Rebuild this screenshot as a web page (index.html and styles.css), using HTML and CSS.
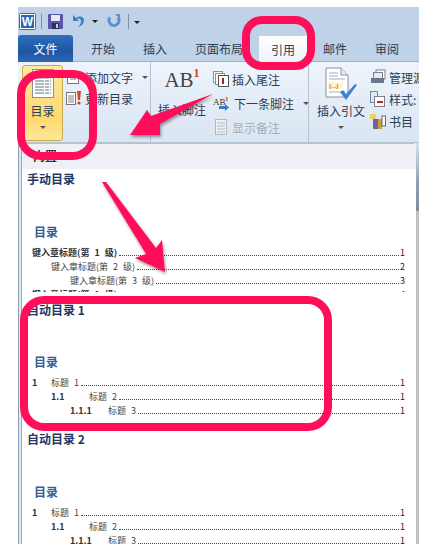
FILE: index.html
```html
<!DOCTYPE html>
<html lang="zh">

<head>
    <meta charset="utf-8">
    <title>引用 目录</title>
    <link rel="stylesheet" href="styles.css">
</head>

<body>
    <div class="window">
        <div class="titlebar">
            <svg class="qat-word" width="17" height="17" viewBox="0 0 17 17"><rect x=".5" y=".5" width="16" height="16" rx="1" fill="#fff" stroke="#2f6fb8"/><rect x="2" y="2" width="13" height="13" fill="#2a66b4"/><text x="8.5" y="13" text-anchor="middle" class="word-w">W</text></svg>
            <span class="qat-sep"></span>
            <svg width="15" height="15" viewBox="0 0 15 15"><rect x="0" y="0" width="15" height="15" rx="1" fill="#5a55a8"/><rect x="3" y="1" width="9" height="6" fill="#e6e8f2"/><rect x="4" y="9" width="7" height="6" fill="#30305c"/><rect x="8" y="10" width="2" height="4" fill="#c9cbe0"/></svg>
            <svg class="qat-undo" width="14" height="14" viewBox="0 0 14 14"><path d="M2 1v6h6L6 5c2-1 4 0 4 2 0 2-1 4-3 6 4-1 6-4 6-7 0-3-4-5-8-2z" fill="#3f7fc4"/></svg>
            <span class="qat-drop"></span>
            <svg class="qat-redo" width="14" height="14" viewBox="0 0 14 14"><path d="M3 3.500A5 5 0 1 0 11 3.500" fill="none" stroke="#5b8fcf" stroke-width="3"/><path d="M8 0h5v5z" fill="#5b8fcf"/></svg>
            <span class="qat-sep qat-sep-last"></span>
            <span class="qat-more"></span>
        </div>

        <div class="tabs">
            <span class="tab-file">文件</span>
            <span class="tab tab-first">开始</span>
            <span class="tab">插入</span>
            <span class="tab">页面布局</span>
            <span class="tab tab-active">引用</span>
            <span class="tab">邮件</span>
            <span class="tab">审阅</span>
        </div>

        <div class="ribbon">
            <div class="group group-toc">
                <div class="big-toc">
                    <svg width="22" height="29" viewBox="0 0 22 29"><rect x=".5" y=".5" width="21" height="28" fill="#fff" stroke="#8a8f98"/><path d="M3 6h16M3 9h16M3 12h16M3 15h16M3 18h16M3 21h16M3 24h16" stroke="#5f7288" stroke-dasharray="9 1 4 1"/></svg>
                    <span class="big-toc-label">目录</span>
                    <span class="caret"></span>
                </div>
                <div class="small-rows small-rows-toc">
                    <div class="small-row">
                        <svg width="16" height="16" viewBox="0 0 16 16"><rect x="1.500" y="2.500" width="11" height="12" fill="#fff" stroke="#777"/><path d="M4 7h6M4 10h6" stroke="#777"/></svg>
                        <span>添加文字</span><span class="caret caret-inline"></span>
                    </div>
                    <div class="small-row">
                        <svg width="16" height="16" viewBox="0 0 16 16"><rect x=".5" y="2.500" width="9" height="12" fill="#fff" stroke="#777"/><path d="M2 6h6M2 8h6M2 10h6M2 12h6" stroke="#888"/><path d="M11 1h4l-1 9h-2z" fill="#d8431c"/><circle cx="13" cy="13" r="1.600" fill="#d8431c"/></svg>
                        <span>更新目录</span>
                    </div>
                </div>
            </div>

            <div class="group group-notes">
                <div class="big-ab">
                    <div class="ab-mark">AB<sup class="ab-one">1</sup></div>
                    <span>插入脚注</span>
                </div>
                <div class="small-rows small-rows-notes">
                    <div class="small-row">
                        <svg width="16" height="16" viewBox="0 0 16 16"><rect x=".5" y=".5" width="9" height="11" fill="#fff" stroke="#8a8f98"/><rect x="2.500" y="2.500" width="9" height="11" fill="#fff" stroke="#8a8f98"/><rect x="5.500" y="4.500" width="10" height="11" fill="#fff" stroke="#555"/><path d="M10 7v6" stroke="#a02020" stroke-width="2"/></svg>
                        <span>插入尾注</span>
                    </div>
                    <div class="small-row">
                        <svg width="18" height="16" viewBox="0 0 18 16"><text x="0" y="10" class="ab-small">AB</text><text x="12" y="6" class="ab-small-one">1</text><path d="M6 11h6V9l4 3.500-4 3.500v-2H6z" fill="#3b78c4"/></svg>
                        <span>下一条脚注</span><span class="caret caret-inline"></span>
                    </div>
                    <div class="small-row small-row-off">
                        <svg width="16" height="16" viewBox="0 0 16 16"><rect x="2.500" y=".5" width="11" height="15" fill="#eef1f4" stroke="#b4b9bf"/><path d="M4 4h8M4 7h8M4 10h8M4 13h8" stroke="#b4b9bf"/></svg>
                        <span>显示备注</span>
                    </div>
                </div>
            </div>

            <div class="group group-cite">
                <div class="big-cite">
                    <svg width="32" height="34" viewBox="0 0 32 34"><path d="M1 1h15l7 7v22H1z" fill="#fff" stroke="#8a8f98"/><path d="M16 1v7h7" fill="#e8ebef" stroke="#8a8f98"/><path d="M4 6h9M4 9h9M4 12h16M4 25h16" stroke="#a8adb5"/><rect x="3" y="15" width="15" height="7" fill="#fff4d8"/><text x="4" y="21" class="cite-mark">{...}</text><path d="M15 25l3-2 3 4 9-10 2 1-11 15z" fill="#3f82cc"/></svg>
                    <span>插入引文</span>
                    <span class="caret"></span>
                </div>
                <div class="small-rows small-rows-cite">
                    <div class="small-row">
                        <svg width="16" height="16" viewBox="0 0 16 16"><rect x="6" y="1" width="9" height="9" fill="#fff" stroke="#7a808a"/><rect x="3.500" y="3.500" width="9" height="9" fill="#e8edf3" stroke="#7a808a"/><path d="M1 9h13v5H1z" fill="#66788e"/></svg>
                        <span class="no-wrap">管理源</span>
                    </div>
                    <div class="small-row">
                        <svg width="16" height="16" viewBox="0 0 16 16"><rect x=".5" y=".5" width="7" height="11" fill="#dfe7f0" stroke="#7088a0"/><rect x="4.500" y="5.500" width="10" height="10" fill="#fff" stroke="#7a808a"/><path d="M7 11h6" stroke="#c02828" stroke-width="2"/></svg>
                        <span>样式:</span>
                    </div>
                    <div class="small-row">
                        <svg width="16" height="16" viewBox="0 0 16 16"><rect x="0" y="1" width="6" height="5" fill="#f2cf55"/><rect x="3" y="6" width="5" height="10" fill="#6d63a8"/><rect x="8" y="6" width="4" height="10" fill="#c7a030"/><rect x="12" y="3" width="3.500" height="10" fill="#fff" stroke="#666"/></svg>
                        <span>书目</span>
                    </div>
                </div>
            </div>
        </div>

        <div class="lower">
            <div class="doc-edge"></div>
            <div class="gallery">
                <div class="gallery-head">内置</div>

                <div class="entry entry-manual">
                    <div class="entry-title">手动目录</div>
                    <div class="toc-title">目录</div>
                    <div class="toc-row toc-bold"><span>键入章标题(第 1 级)</span><i></i><b>1</b></div>
                    <div class="toc-row lv2"><span>键入章标题(第 2 级)</span><i></i><b>2</b></div>
                    <div class="toc-row lv3"><span>键入章标题(第 3 级)</span><i></i><b>3</b></div>
                    <div class="toc-row toc-bold"><span>键入章标题(第 1 级)</span><i></i><b>4</b></div>
                </div>

                <div class="entry entry-auto1">
                    <div class="entry-title">自动目录 1</div>
                    <div class="toc-title">目录</div>
                    <div class="toc-row"><em class="num">1</em><span>标题 1</span><i></i><b>1</b></div>
                    <div class="toc-row lv2"><em class="num">1.1</em><span>标题 2</span><i></i><b>1</b></div>
                    <div class="toc-row lv3"><em class="num">1.1.1</em><span>标题 3</span><i></i><b>1</b></div>
                </div>

                <div class="entry entry-auto2">
                    <div class="entry-title">自动目录 2</div>
                    <div class="toc-title">目录</div>
                    <div class="toc-row"><em class="num">1</em><span>标题 1</span><i></i><b>1</b></div>
                    <div class="toc-row lv2"><em class="num">1.1</em><span>标题 2</span><i></i><b>1</b></div>
                    <div class="toc-row lv3"><em class="num">1.1.1</em><span>标题 3</span><i></i><b>1</b></div>
                </div>
            </div>
            <div class="doc-scroll"></div>
        </div>
    </div>

    <!-- red marks drawn on top of the screenshot -->
    <svg class="marks" width="448" height="544" viewBox="0 0 448 544">
        <defs>
            <filter id="shade" x="-10%" y="-10%" width="130%" height="130%">
                <feDropShadow dx="1" dy="2" stdDeviation="1.500" flood-color="#000" flood-opacity=".4"/>
            </filter>
        </defs>
        <rect class="ring" x="21" y="74" width="72" height="82" rx="20"/>
        <rect class="ring" x="246" y="20" width="65" height="46" rx="16"/>
        <rect class="ring" x="24" y="300" width="304" height="127" rx="20"/>
        <path class="arrow" filter="url(#shade)" d="M130 135 147 110 151 116 213 94 160 124 160 135z"/>
        <path class="arrow" filter="url(#shade)" d="M102 182 106 182 156 248 162 240 165 272 135 258 146 254z"/>
    </svg>
</body>

</html>
```

FILE: styles.css
```css
html, body {
    margin: 0;
    height: 544px;
    overflow: hidden;
    background: #fff;
}

body {
    font-family: "Noto Sans CJK SC", "Noto Sans", sans-serif;
    font-size: 12px;
    color: #2b3b52;
}

.window {
    margin: 7px 0 0 18px;
    width: 401px;
    height: 537px;
    overflow: hidden;
}

/* title bar */
.titlebar {
    height: 28px;
    display: flex;
    align-items: center;
    background: #c0d2e8;
    padding-left: 1px;
    gap: 5px;
}

.word-w {
    font: bold 12px "Liberation Sans", sans-serif;
    fill: #fff;
}

.qat-sep {
    width: 1px;
    height: 15px;
    background: #7f8fa5;
    margin-right: 1px;
}

.qat-undo {
    margin-left: 3px;
}

.qat-drop {
    width: 0;
    height: 0;
    border: 3px solid transparent;
    border-top: 3px solid #222;
    border-bottom: 0;
    margin-left: 2px;
}

.qat-redo {
    margin-left: 4px;
}

.qat-sep-last {
    margin-left: 2px;
    margin-right: 0;
}

.qat-more {
    width: 0;
    height: 0;
    border: 3px solid transparent;
    border-top: 3px solid #222;
    border-bottom: 0;
    position: relative;
    top: 1px;
}

/* tabs */
.tabs {
    height: 27px;
    display: flex;
    align-items: center;
    gap: 28px;
    background: #c0d2e8;
    border-bottom: 1px solid #9fb2c9;
    box-sizing: border-box;
}

.tab-file {
    width: 55px;
    height: 27px;
    line-height: 27px;
    text-align: center;
    color: #fff;
    background: linear-gradient(#2f6fc0, #1f56a0 60%, #2a68b8);
    border-radius: 3px 3px 0 0;
    margin-right: -10px;
}

.tab {
    line-height: 27px;
}

.tab-active {
    margin: 0 -12px;
    padding: 0 12px;
    height: 26px;
    line-height: 27px;
    align-self: flex-start;
    margin-top: 1px;
    background: linear-gradient(#fff, #eef4fb);
}

/* ribbon */
.ribbon {
    height: 81px;
    display: flex;
    background: linear-gradient(#eef4fb, #d9e5f3);
    border-bottom: 1px solid #b6c4d4;
    box-sizing: border-box;
}

.group {
    display: flex;
    box-sizing: border-box;
    border-right: 1px solid #b4c3d5;
}

.group-toc {
    width: 133px;
    padding: 3px 0 0 4px;
}

.group-notes {
    width: 158px;
}

.group-cite {
    width: 110px;
    border-right: 0;
}

.big-toc {
    width: 41px;
    height: 76px;
    padding-top: 3px;
    box-sizing: border-box;
    border: 1px solid #c9a94e;
    border-radius: 3px;
    background: linear-gradient(#fde9a3, #fdd96f 70%, #fee79a);
    display: flex;
    flex-direction: column;
    align-items: center;
}

.big-toc-label {
    margin-top: 4px;
    line-height: 18px;
    color: #1f3f5c;
}

.caret {
    width: 0;
    height: 0;
    border: 3px solid transparent;
    border-top: 3px solid #555;
    border-bottom: 0;
    margin-top: 6px;
}

.caret-inline {
    margin: 0 0 0 6px;
}

.small-rows {
    display: flex;
    flex-direction: column;
}

.small-rows-toc {
    margin-left: 3px;
    padding-top: 4px;
    gap: 5px;
}

.small-rows-notes {
    margin-left: 7px;
    padding-top: 9px;
    gap: 8px;
}

.small-rows-cite {
    margin-left: 5px;
    padding-top: 7px;
    gap: 6px;
}

.small-row {
    height: 16px;
    display: flex;
    align-items: center;
    gap: 3px;
    white-space: nowrap;
}

.small-row-off {
    color: #a5adb8;
}

.big-ab {
    width: 61px;
    margin-left: 7px;
    display: flex;
    flex-direction: column;
    align-items: center;
    white-space: nowrap;
}

.ab-mark {
    font: 21px "Liberation Serif", serif;
    color: #444;
    height: 32px;
    line-height: 32px;
    margin-top: 2px;
}

.ab-one {
    font: bold 12px "Liberation Serif", serif;
    color: #c8431c;
    vertical-align: 10px;
    line-height: 0;
}

.big-ab span {
    margin-top: 5px;
    line-height: 18px;
}

.ab-small {
    font: 9px "Liberation Serif", serif;
    fill: #333;
}

.ab-small-one {
    font: bold 7px "Liberation Serif", serif;
    fill: #c8431c;
}

.big-cite {
    width: 52px;
    margin-left: 8px;
    padding-top: 5px;
    display: flex;
    flex-direction: column;
    align-items: center;
}

.big-cite span:not(.caret) {
    margin-top: 1px;
    line-height: 18px;
    white-space: nowrap;
}

.cite-mark {
    font: bold 6px "Liberation Sans", sans-serif;
    fill: #d07820;
}

/* dropdown gallery */
.lower {
    display: flex;
    height: 401px;
}

.doc-edge {
    width: 4px;
    box-sizing: border-box;
    background: #dbe8f8;
    border-left: 1px solid #8c9db2;
    border-right: 1px solid #9aa7b6;
}

.gallery {
    width: 394px;
    overflow: hidden;
    background: #fff;
    border-top: 1px solid #b9c0c9;
    border-radius: 0 3px 0 0;
    box-sizing: border-box;
}

.gallery-head {
    height: 25px;
    line-height: 24px;
    padding-left: 11px;
    background: #eff0f5;
    font-weight: bold;
    color: #333;
}

.doc-scroll {
    width: 3px;
    background: linear-gradient(#d3dfee 0, #b4c2d4 5%, #97a5b7 9%, #7d8ba0 16.800%, #c0c0c0 17%);
}

.entry {
    overflow: hidden;
}

.entry-manual {
    height: 123px;
    padding-top: 2px;
    box-sizing: border-box;
}

.entry-auto1 {
    padding-top: 10px;
}

.entry-auto2 {
    padding-top: 13px;
}

.entry-title {
    padding-left: 5px;
    line-height: 16px;
    font-weight: bold;
    color: #1f3864;
}

.toc-title {
    margin-top: 37px;
    margin-bottom: 6px;
    padding-left: 12px;
    line-height: 16px;
    font-weight: bold;
    color: #365f91;
}

.entry-auto1 .toc-title {
    margin-top: 36px;
}

.toc-row {
    display: flex;
    align-items: baseline;
    height: 14px;
    line-height: 14px;
    padding: 0 11px 0 10px;
    font-size: 9px;
    word-spacing: 3px;
    color: #444;
    white-space: nowrap;
}

.toc-row.lv2 {
    padding-left: 29px;
}

.toc-row.lv3 {
    padding-left: 48px;
}

.toc-row i {
    flex: 1;
    border-bottom: 1px dotted #444;
    margin: 0 1px 0 2px;
}

.toc-row b {
    font-weight: normal;
    color: #222;
}

.toc-bold span {
    font-weight: bold;
    color: #333;
}

.num {
    font-style: normal;
    font-weight: bold;
    color: #333;
    width: 19px;
}

.lv2 .num,
.lv3 .num {
    width: 38px;
}

/* marks */
.marks {
    position: absolute;
    left: 0;
    top: 0;
}

.ring {
    fill: none;
    stroke: #ff0f5a;
    stroke-width: 8;
}

.arrow {
    fill: #ff0f5a;
}
```
